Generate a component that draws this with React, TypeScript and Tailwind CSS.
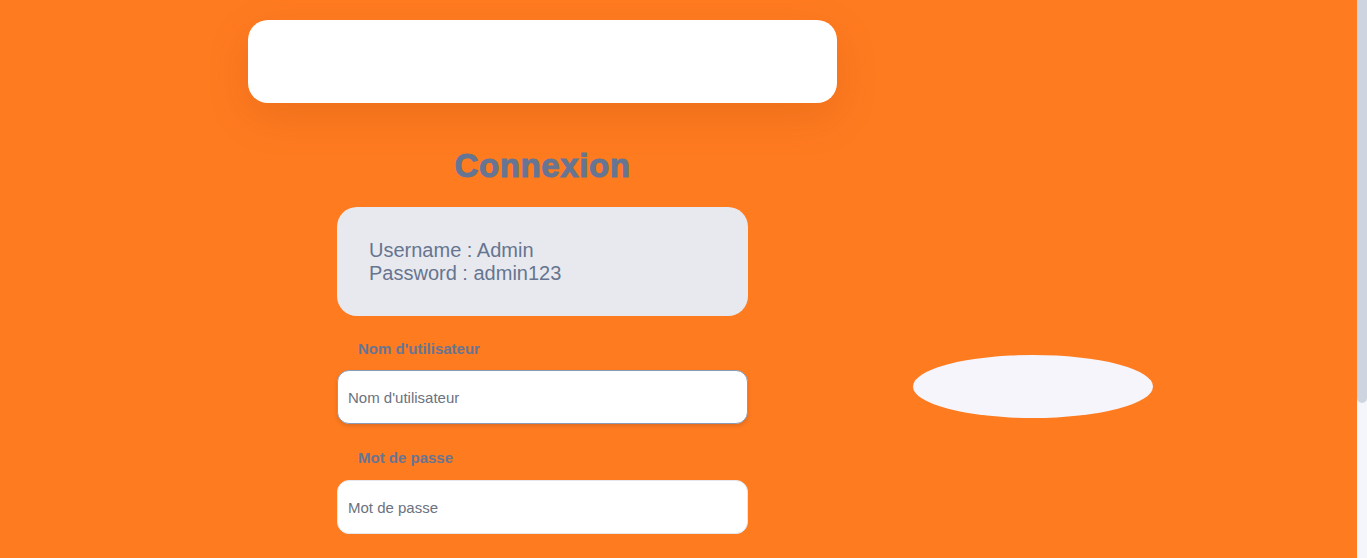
import { useState } from "react";

export default function App() {
  const [username, setUsername] = useState("");
  const [password, setPassword] = useState("");

  return (
    <div className="flex h-screen overflow-hidden bg-[#f5f6fb] font-['Liberation_Sans',Arial,sans-serif]">
      <main className="relative flex min-w-0 flex-1 bg-[#ff7b20]">
        <div className="flex w-[1085px] flex-col items-center pt-5">
          <div className="h-[83px] w-[589px] shrink-0 rounded-[20px] bg-white shadow-[0_14px_40px_rgba(150,60,0,0.18)]" />

          <h1 className="mt-[44px] text-[33px] leading-[38px] font-bold tracking-[0.6px] text-[#667593] [-webkit-text-stroke:1px_#667593]">
            Connexion
          </h1>

          <div className="mt-[22px] w-[411px] rounded-[20px] bg-[#e8e9ef] px-8 pt-8 pb-[31px] text-[20px] leading-[23px] text-[#66758f]">
            <p>Username : Admin</p>
            <p>Password : admin123</p>
          </div>

          <form className="w-[411px]" onSubmit={(e) => e.preventDefault()}>
            <label
              htmlFor="username"
              className="mt-6 block pl-[21px] text-[15px] leading-[18px] font-bold text-[#667593]"
            >
              Nom d'utilisateur
            </label>
            <input
              id="username"
              autoFocus
              value={username}
              onChange={(e) => setUsername(e.target.value)}
              placeholder="Nom d'utilisateur"
              className="mt-3 block h-[54px] w-full rounded-xl border border-[#8a9bb5] bg-white px-[10px] text-[15px] text-[#4b5563] caret-[#4b5563] shadow-[0_2px_4px_rgba(0,0,0,0.12)] outline-none placeholder:text-[#6b7280]"
            />

            <label
              htmlFor="password"
              className="mt-[25px] block pl-[21px] text-[15px] leading-[18px] font-bold text-[#667593]"
            >
              Mot de passe
            </label>
            <input
              id="password"
              type="password"
              value={password}
              onChange={(e) => setPassword(e.target.value)}
              placeholder="Mot de passe"
              className="mt-[13px] block h-[54px] w-full rounded-xl border border-[#e5e7eb] bg-white px-[10px] text-[15px] text-[#4b5563] outline-none placeholder:text-[#6b7280]"
            />
          </form>
        </div>

        {/* decorative blob */}
        <div className="absolute top-[355px] left-[913px] h-[63px] w-[240px] rounded-[50%] bg-[#f5f5fb]" />
      </main>

      {/* page scrollbar */}
      <aside className="w-[10px] shrink-0 bg-[#f5f6fb]">
        <div className="h-[403px] rounded-b-full bg-[#cfd5e0]" />
      </aside>
    </div>
  );
}
